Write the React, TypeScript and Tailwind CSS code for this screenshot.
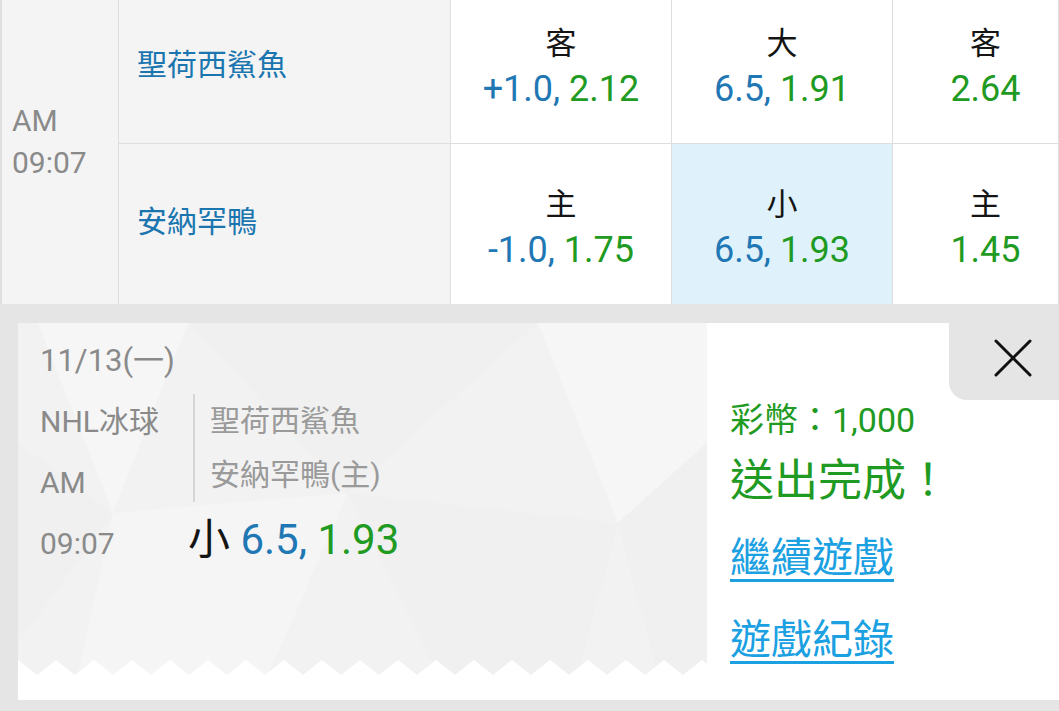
import React from "react";

const font = { fontFamily: '"Roboto", "Noto Sans CJK TC", sans-serif' };

function OddsCell({
  label,
  line,
  odds,
  active,
  top,
  last,
}: {
  label: string;
  line?: string;
  odds: string;
  active?: boolean;
  top?: boolean;
  last?: boolean;
}) {
  return (
    <div
      className={`flex flex-col items-center justify-center pt-[8px] border-r border-[#dedede] ${
        top ? "border-b" : ""
      } ${last ? "pl-[20px]" : ""} ${active ? "bg-[#dff2fb]" : "bg-white"}`}
    >
      <div className="text-[31px] leading-[40px] text-[#141414]">{label}</div>
      <div className="mt-[3px] text-[36px] leading-[44px]">
        {line && <span className="text-[#1f77b4]">{line} </span>}
        <span className="text-[#1f9a22]">{odds}</span>
      </div>
    </div>
  );
}

function Pattern() {
  return (
    <svg
      className="absolute inset-0 w-full h-full"
      viewBox="0 0 689 377"
      preserveAspectRatio="none"
    >
      <rect width="689" height="377" fill="#f2f2f2" />
      <polygon points="20,0 170,0 95,190" fill="#f6f6f6" />
      <polygon points="170,0 520,0 330,170" fill="#f0f0f0" />
      <polygon points="95,190 330,170 250,352 60,352" fill="#f5f5f5" />
      <polygon points="520,0 689,0 689,120 600,200" fill="#f6f6f6" />
      <polygon points="330,170 600,200 560,352 420,352" fill="#f0f0f0" />
      <polygon points="600,200 689,120 689,352 640,352" fill="#f0f0f0" />
      <polygon points="0,120 95,190 0,320" fill="#f0f0f0" />
      <polygon points="0,352 689,352 689,377 0,377" fill="#ffffff" />
    </svg>
  );
}

function Zigzag() {
  const pts: string[] = ["0,16"];
  for (let x = 0; x <= 700; x += 38) {
    pts.push(`${x},1`);
    pts.push(`${x + 19},16`);
  }
  pts.push("700,16");
  return (
    <svg className="absolute left-0 right-0 bottom-[24px] w-full h-[17px]" viewBox="0 0 689 17" preserveAspectRatio="none">
      <polygon points={pts.join(" ")} fill="#ffffff" />
    </svg>
  );
}

export default function App() {
  return (
    <div className="w-[1059px] h-[711px] overflow-hidden bg-[#e5e5e5]" style={font}>
      <div className="h-[304px] overflow-hidden">
        <div className="-mt-4 grid grid-cols-[119px_332px_221px_221px_1fr] grid-rows-[160px_160px]">
          <div className="row-span-2 bg-[#f4f4f4] border-l-2 border-r border-[#dedede] pl-[10px] pb-1 flex flex-col justify-center text-[30px] leading-[42px] text-[#8a8a8a]">
            <div>AM</div>
            <div>09:07</div>
          </div>
          <div className="bg-[#f4f4f4] border-r border-b border-[#dedede] pl-[18px] pt-[2px] flex items-center text-[30px] text-[#1b76b0]">
            聖荷西鯊魚
          </div>
          <OddsCell top label="客" line="+1.0," odds="2.12" />
          <OddsCell top label="大" line="6.5," odds="1.91" />
          <OddsCell top last label="客" odds="2.64" />
          <div className="bg-[#f4f4f4] border-r border-[#dedede] pl-[18px] pb-[6px] flex items-center text-[30px] text-[#1b76b0]">
            安納罕鴨
          </div>
          <OddsCell label="主" line="-1.0," odds="1.75" />
          <OddsCell active label="小" line="6.5," odds="1.93" />
          <OddsCell last label="主" odds="1.45" />
        </div>
      </div>

      <div className="ml-[18px] mt-[19px] h-[377px] flex">
        <div className="relative w-[689px] h-full">
          <Pattern />
          <Zigzag />
          <div className="relative pl-[22px] pt-[16px]">
            <div className="text-[31px] leading-[44px] text-[#8a8a8a]">11/13(一)</div>
            <div className="mt-[8px] flex">
              <div className="w-[153px] text-[30px] text-[#8a8a8a]">
                <div className="h-[61px] leading-[61px]">NHL冰球</div>
                <div className="h-[61px] leading-[61px]">AM</div>
                <div className="h-[61px] leading-[61px]">09:07</div>
              </div>
              <div>
                <div className="mt-[3px] border-l-2 border-[#d6d6d6] pl-[15px] text-[30px] text-[#9a9a9a]">
                  <div className="h-[54px] leading-[54px]">聖荷西鯊魚</div>
                  <div className="h-[54px] leading-[54px]">安納罕鴨(主)</div>
                </div>
                <div className="-ml-[5px] mt-[8px] text-[42px] leading-[60px]">
                  <span className="text-[#141414]">小 </span>
                  <span className="text-[#1f77b4]">6.5, </span>
                  <span className="text-[#1f9a22]">1.93</span>
                </div>
              </div>
            </div>
          </div>
        </div>

        <div className="flex-1 bg-white flex flex-col">
          <div className="flex justify-end">
            <button className="w-[110px] h-[77px] bg-[#e5e5e5] rounded-bl-[18px] flex justify-end pr-[27px] pt-[16px]">
              <svg width="38" height="38" viewBox="0 0 38 38" stroke="#111" strokeWidth="3" strokeLinecap="round">
                <line x1="2" y1="2" x2="36" y2="36" />
                <line x1="36" y1="2" x2="2" y2="36" />
              </svg>
            </button>
          </div>
          <div className="pl-[23px]">
            <div className="text-[34px] leading-[40px] text-[#1f9a22]">彩幣：1,000</div>
            <div className="text-[44px] leading-[82px] text-[#1f9a22]">送出完成！</div>
            <a className="block text-[41px] leading-[72px] text-[#1ba0e2] underline decoration-[3px] underline-offset-[7px]">
              繼續遊戲
            </a>
            <a className="block mt-[10px] text-[41px] leading-[72px] text-[#1ba0e2] underline decoration-[3px] underline-offset-[7px]">
              遊戲紀錄
            </a>
          </div>
        </div>
      </div>
    </div>
  );
}
